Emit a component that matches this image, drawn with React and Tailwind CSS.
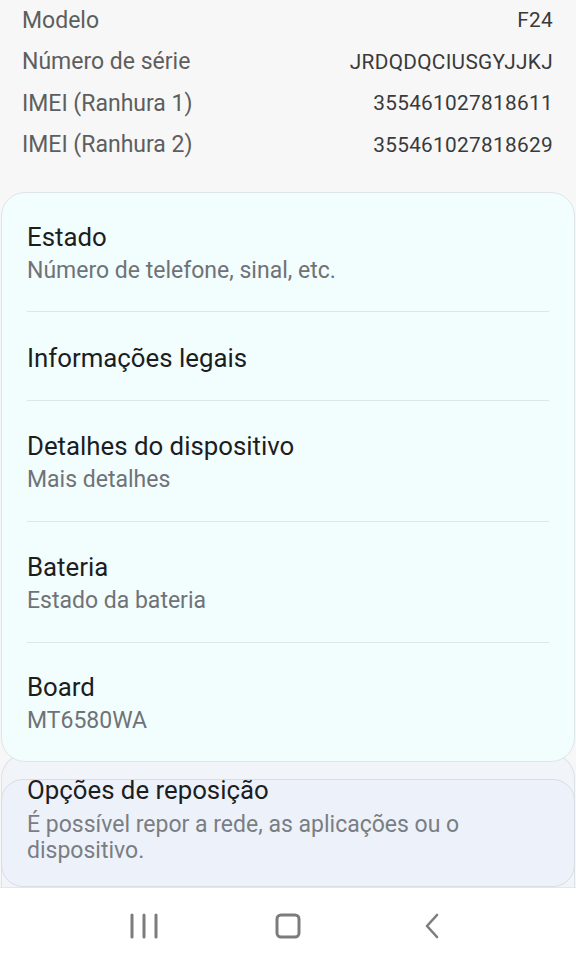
import React from "react";

const specs = [
    { label: "Modelo", value: "F24" },
    { label: "Número de série", value: "JRDQDQCIUSGYJJKJ" },
    { label: "IMEI (Ranhura 1)", value: "355461027818611" },
    { label: "IMEI (Ranhura 2)", value: "355461027818629" },
];

const items = [
    { title: "Estado", sub: "Número de telefone, sinal, etc.", h: "h-[119px]" },
    { title: "Informações legais", h: "h-[89px]" },
    { title: "Detalhes do dispositivo", sub: "Mais detalhes", h: "h-[121px]" },
    { title: "Bateria", sub: "Estado da bateria", h: "h-[121px]" },
    { title: "Board", sub: "MT6580WA", h: "h-[118px]" },
];

const App = () => {
    return (
        <div
            className="w-[576px] h-[963px] overflow-hidden bg-[#f7f7f7] flex flex-col"
            style={{ fontFamily: "Roboto, 'Noto Sans', sans-serif" }}
        >
            {/* Spec rows */}
            <div className="flex flex-col px-[22px] mr-[1px]">
                {specs.map((s) => (
                    <div key={s.label} className="flex items-center justify-between h-[41.5px]">
                        <span className="text-[23px] text-[#5e5e5e]">{s.label}</span>
                        <span className="text-[20.8px] text-[#3a3a3a] tracking-[0.3px]">{s.value}</span>
                    </div>
                ))}
            </div>

            {/* Main card */}
            <div className="relative z-10 mt-[26px] mx-[1px] rounded-[24px] border border-[#dfe5e8] bg-[#f2fdfe] px-[25px]">
                {items.map((it, i) => (
                    <div
                        key={it.title}
                        className={`flex flex-col justify-center pt-[4px] ${it.h} ${
                            i < items.length - 1 ? "border-b border-[#dde6e8]" : ""
                        }`}
                    >
                        <span className="text-[25.8px] leading-[33px] text-[#1c1d1f]">{it.title}</span>
                        {it.sub && (
                            <span className="text-[23px] leading-[33px] text-[#6f7377]">{it.sub}</span>
                        )}
                    </div>
                ))}
            </div>

            {/* Reset options (scrolled underneath) */}
            <div className="-mt-[8px] mx-[1px] rounded-t-[24px] border border-b-0 border-[#dde2e7] bg-[#f1f4f8] pt-[24px] flex-1 flex flex-col">
                <div className="-mx-[1px] rounded-[22px] border border-[#d9dee4] bg-[#edf2fa] px-[25px] pb-[14px] h-[108px]">
                    <div className="-mt-[6px] text-[25.8px] leading-[33px] text-[#1c1d1f]">Opções de reposição</div>
                    <div className="text-[23px] leading-[26px] text-[#7a7e83] pt-[5px]">
                        É possível repor a rede, as aplicações ou o
                        <br />
                        dispositivo.
                    </div>
                </div>
            </div>

            {/* Navigation bar */}
            <div className="h-[77px] shrink-0 bg-white border-t border-[#e4e6e9] flex items-center justify-center">
                <div className="w-[144px] flex justify-center">
                    <svg width="30" height="26" viewBox="0 0 30 26">
                        <path d="M3 2v22M15 2v22M27 2v22" stroke="#7c7c7c" strokeWidth="3" strokeLinecap="round" />
                    </svg>
                </div>
                <div className="w-[144px] flex justify-center">
                    <svg width="26" height="26" viewBox="0 0 26 26">
                        <rect x="2" y="2" width="22" height="22" rx="4" fill="none" stroke="#7c7c7c" strokeWidth="3" />
                    </svg>
                </div>
                <div className="w-[144px] flex justify-center">
                    <svg width="16" height="26" viewBox="0 0 16 26">
                        <path d="M13 2L3 13l10 11" fill="none" stroke="#7c7c7c" strokeWidth="2.6" strokeLinecap="round" strokeLinejoin="round" />
                    </svg>
                </div>
            </div>
        </div>
    );
};

export default App;
